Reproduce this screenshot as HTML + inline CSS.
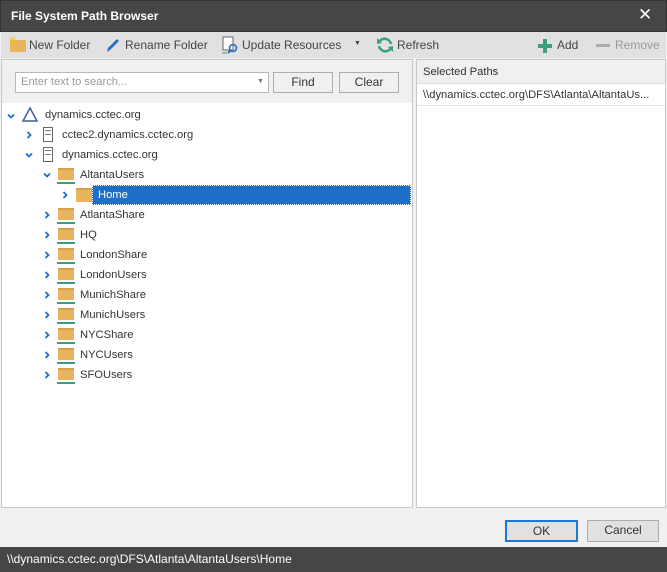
<!DOCTYPE html><html><head><style>
*{box-sizing:border-box;margin:0;padding:0}
body{width:667px;height:572px;position:relative;background:#f0f0f0;font-family:"Liberation Sans",sans-serif;font-size:11.2px;color:#333;overflow:hidden}
.a{position:absolute}
.t{white-space:nowrap}
.row{position:absolute;height:20px;line-height:20px;white-space:nowrap}
.fold{position:absolute;width:16px;height:12px;background:#e8b55e;border-top:2px solid #d4a04a}
.fold:after{content:"";position:absolute;left:-1px;right:-1px;bottom:-4px;height:2px;background:#3aa07a}
.arr{position:absolute;width:8px;height:8px}
.srv{position:absolute;width:10px;height:15px;border:1px solid #666;background:#fff}
.srv:before{content:"";position:absolute;left:1px;right:1px;top:2px;height:3px;border-top:1px solid #777;border-bottom:1px solid #777}
.btn{position:absolute;border:1px solid #adadad;background:#f0f0f0;text-align:center;line-height:18px;font-size:12px}
</style></head><body>
<svg width="0" height="0" style="position:absolute"><defs>
<symbol id="r" viewBox="0 0 8 8"><path d="M2.5 1 L5.5 4 L2.5 7" fill="none" stroke="#1e6fc8" stroke-width="1.8"/></symbol>
<symbol id="d" viewBox="0 0 8 8"><path d="M1 2.5 L4 5.5 L7 2.5" fill="none" stroke="#1e6fc8" stroke-width="1.8"/></symbol>
</defs></svg>
<div class="a" style="left:0;top:0;width:667px;height:32px;background:#464646;border:1px solid #333"></div>
<div class="a t" style="left:11px;top:9px;color:#fff;font-weight:bold;font-size:12px">File System Path Browser</div>
<div class="a t" style="left:638px;top:5px;color:#fff;font-size:17px">✕</div>
<div class="a" style="left:1px;top:32px;width:665px;height:26px;background:#e1e1e1"></div>
<div class="a" style="left:10px;top:40px;width:16px;height:12px;background:#e8b55e"></div>
<div class="a t" style="left:8px;top:34px;color:#f0c020;font-size:11px">✳</div>
<div class="a t" style="left:29px;top:38px;color:#444;font-size:12px">New Folder</div>
<svg class="a" style="left:104px;top:36px" width="18" height="18"><path d="M3 16 L4 12 L13 3 L15 5 L6 14 Z" fill="#2b6cc4"/></svg>
<div class="a t" style="left:125px;top:38px;color:#444;font-size:12px">Rename Folder</div>
<svg class="a" style="left:221px;top:36px" width="18" height="18"><rect x="2" y="1" width="10" height="13" fill="#fff" stroke="#666"/><circle cx="12" cy="12" r="3.5" fill="none" stroke="#2b6cc4" stroke-width="1.6"/><path d="M10 14 L7 17" stroke="#2b6cc4" stroke-width="2"/><path d="M1 17h5" stroke="#3aa07a"/></svg>
<div class="a t" style="left:242px;top:38px;color:#444;font-size:12px">Update Resources</div>
<div class="a t" style="left:354px;top:40px;color:#444;font-size:7px">▼</div>
<svg class="a" style="left:376px;top:36px" width="18" height="18"><path d="M15 8 A6.5 6.5 0 0 0 3 6" fill="none" stroke="#3aa07a" stroke-width="2.5"/><path d="M3 10 A6.5 6.5 0 0 0 15 12" fill="none" stroke="#3aa07a" stroke-width="2.5"/><path d="M1 2 L6 7 L1 8Z M17 16 L12 11 L17 10Z" fill="#3aa07a"/></svg>
<div class="a t" style="left:397px;top:38px;color:#444;font-size:12px">Refresh</div>
<div class="a" style="left:538px;top:44px;width:14px;height:4px;background:#3aa07a"></div>
<div class="a" style="left:543px;top:39px;width:4px;height:14px;background:#3aa07a"></div>
<div class="a t" style="left:557px;top:38px;color:#444;font-size:12px">Add</div>
<div class="a" style="left:596px;top:44px;width:14px;height:3px;background:#aaa"></div>
<div class="a t" style="left:615px;top:38px;color:#999;font-size:12px">Remove</div>
<div class="a" style="left:1px;top:59px;width:412px;height:449px;background:#fff;border:1px solid #c8c8c8"></div>
<div class="a" style="left:2px;top:60px;width:410px;height:43px;background:#f0f0f0"></div>
<div class="a" style="left:15px;top:72px;width:254px;height:21px;background:#fff;border:1px solid #b8b8b8"></div>
<div class="a t" style="left:21px;top:76px;color:#999">Enter text to search...</div>
<div class="a t" style="left:257px;top:78px;color:#777;font-size:7px">▼</div>
<div class="btn" style="left:273px;top:72px;width:60px;height:21px">Find</div>
<div class="btn" style="left:339px;top:72px;width:60px;height:21px">Clear</div>
<svg class="arr" style="left:7px;top:112px"><use href="#d"/></svg>
<svg class="a" style="left:22px;top:107px" width="16" height="15"><path d="M8 1 L15 14 L1 14Z" fill="none" stroke="#3b5fa0" stroke-width="1.5"/></svg>
<div class="row" style="left:45px;top:105px">dynamics.cctec.org</div>
<svg class="arr" style="left:25px;top:131px"><use href="#r"/></svg>
<div class="srv" style="left:43px;top:127px"></div>
<div class="row" style="left:62px;top:125px">cctec2.dynamics.cctec.org</div>
<svg class="arr" style="left:25px;top:151px"><use href="#d"/></svg>
<div class="srv" style="left:43px;top:147px"></div>
<div class="row" style="left:62px;top:145px">dynamics.cctec.org</div>
<svg class="arr" style="left:43px;top:171px"><use href="#d"/></svg>
<div class="fold" style="left:58px;top:168px"></div>
<div class="row" style="left:80px;top:165px">AltantaUsers</div>
<svg class="arr" style="left:61px;top:191px"><use href="#r"/></svg>
<div class="a" style="left:76px;top:188px;width:16px;height:14px;background:#e8b55e;border-top:2px solid #d4a04a"></div>
<div class="a" style="left:92px;top:185px;width:319px;height:20px;background:#1e6fc8;border:1px dotted #fff"></div>
<div class="row" style="left:98px;top:185px;color:#fff">Home</div>
<svg class="arr" style="left:43px;top:211px"><use href="#r"/></svg><div class="fold" style="left:58px;top:208px"></div><div class="row" style="left:80px;top:205px">AtlantaShare</div>
<svg class="arr" style="left:43px;top:231px"><use href="#r"/></svg><div class="fold" style="left:58px;top:228px"></div><div class="row" style="left:80px;top:225px">HQ</div>
<svg class="arr" style="left:43px;top:251px"><use href="#r"/></svg><div class="fold" style="left:58px;top:248px"></div><div class="row" style="left:80px;top:245px">LondonShare</div>
<svg class="arr" style="left:43px;top:271px"><use href="#r"/></svg><div class="fold" style="left:58px;top:268px"></div><div class="row" style="left:80px;top:265px">LondonUsers</div>
<svg class="arr" style="left:43px;top:291px"><use href="#r"/></svg><div class="fold" style="left:58px;top:288px"></div><div class="row" style="left:80px;top:285px">MunichShare</div>
<svg class="arr" style="left:43px;top:311px"><use href="#r"/></svg><div class="fold" style="left:58px;top:308px"></div><div class="row" style="left:80px;top:305px">MunichUsers</div>
<svg class="arr" style="left:43px;top:331px"><use href="#r"/></svg><div class="fold" style="left:58px;top:328px"></div><div class="row" style="left:80px;top:325px">NYCShare</div>
<svg class="arr" style="left:43px;top:351px"><use href="#r"/></svg><div class="fold" style="left:58px;top:348px"></div><div class="row" style="left:80px;top:345px">NYCUsers</div>
<svg class="arr" style="left:43px;top:371px"><use href="#r"/></svg><div class="fold" style="left:58px;top:368px"></div><div class="row" style="left:80px;top:365px">SFOUsers</div>
<div class="a" style="left:416px;top:59px;width:250px;height:449px;background:#fff;border:1px solid #c8c8c8"></div>
<div class="a" style="left:417px;top:60px;width:248px;height:24px;background:#f0f0f0;border-bottom:1px solid #ddd"></div>
<div class="a t" style="left:423px;top:66px">Selected Paths</div>
<div class="a" style="left:417px;top:105px;width:248px;height:1px;background:#e4e4e4"></div>
<div class="a t" style="left:423px;top:89px">\\dynamics.cctec.org\DFS\Atlanta\AltantaUs...</div>
<div class="btn" style="left:505px;top:520px;width:73px;height:22px;border:2px solid #1e78d7;background:#e1e1e1">OK</div>
<div class="btn" style="left:587px;top:520px;width:72px;height:22px;background:#e1e1e1">Cancel</div>
<div class="a" style="left:0;top:547px;width:667px;height:25px;background:#464646"></div>
<div class="a t" style="left:7px;top:552px;color:#fff;font-size:12px">\\dynamics.cctec.org\DFS\Atlanta\AltantaUsers\Home</div>
</body></html>
